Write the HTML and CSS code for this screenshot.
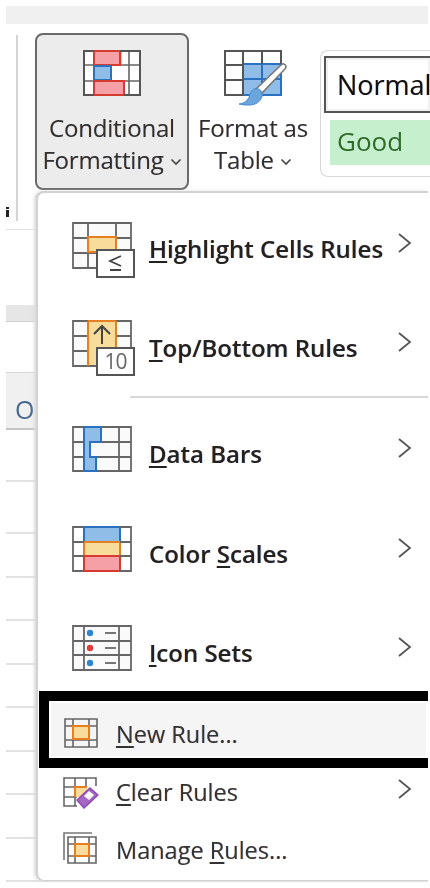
FILE: index.html
```html
<!DOCTYPE html>
<html lang="en">
<head>
<meta charset="utf-8">
<title>Conditional Formatting</title>
<link rel="stylesheet" href="styles.css">
</head>
<body>
<div class="page">
  <div class="topband"></div>
  <section class="ribbon">
    <span class="stub"></span>
    <div class="sep"></div>
    <div class="cf-btn">
      <svg class="ribbon-icon" width="60" height="48" viewBox="0 0 60 48">
        <rect x="2" y="2" width="56" height="44" fill="#fff"/>
        <path d="M2 16H13M39 16H58M2 32H13M43 32H58M47 2V46" stroke="#666" stroke-width="1.600" fill="none"/>
        <path d="M39 2V16M29 16V32" stroke="#999" stroke-width="1" fill="none"/>
        <rect x="12" y="2" width="26" height="14" fill="#f4a0a6" stroke="#d63b30" stroke-width="2"/>
        <rect x="12" y="17" width="17" height="14" fill="#90bde8" stroke="#2a72c0" stroke-width="2"/>
        <rect x="12" y="32" width="30" height="14" fill="#f4a0a6" stroke="#d63b30" stroke-width="2"/>
        <path d="M12 2H2V46H12M38 2H58V46H42" stroke="#555" stroke-width="2" fill="none"/>
      </svg>
      <div class="btn-label">Conditional<br>Formatting <svg class="mini" width="12" height="8" viewBox="0 0 12 8"><path d="M1.500 1.500L6 6L10.500 1.500" fill="none" stroke="#444" stroke-width="1.600"/></svg></div>
    </div>
    <div class="fmt-btn">
      <svg class="ribbon-icon" width="66" height="58" viewBox="0 0 66 58">
        <rect x="20" y="15" width="38" height="31" fill="#90bde8" stroke="#2a72c0" stroke-width="2"/>
        <path d="M39 15V46M20 30H58" stroke="#2a72c0" stroke-width="2"/>
        <path d="M20 46H2V2H58V15M20 2V46M39 2V15M2 16H20M2 31H20" fill="none" stroke="#555" stroke-width="2"/>
        <path d="M33 40L58 16C60 14 63 15 63 18C63 19 62 20 61 21L38 45Z" fill="#fff" stroke="#777" stroke-width="1.600"/>
        <path d="M16 55C23 54 26 50 27 45C29 39 35 38 38 42C42 47 36 56 27 56C23 56 19 56 16 55Z" fill="#6aa5dc" stroke="#4a8ccc"/>
      </svg>
      <div class="btn-label">Format as<br>Table <svg class="mini" width="12" height="8" viewBox="0 0 12 8"><path d="M1.500 1.500L6 6L10.500 1.500" fill="none" stroke="#444" stroke-width="1.600"/></svg></div>
    </div>
    <div class="styles">
      <div class="style-normal"><span>Normal</span></div>
      <div class="style-good">Good</div>
    </div>
  </section>
  <div class="formula"></div>
  <div class="greyband"></div>
  <div class="colspace"></div>
  <div class="rowhead"><span>O</span></div>
  <div class="sheet-row tall"></div><div class="sheet-row tall"></div><div class="sheet-row"></div><div class="sheet-row"></div><div class="sheet-row"></div>
  <div class="sheet-row"></div><div class="sheet-row"></div><div class="sheet-row"></div><div class="sheet-row"></div><div class="sheet-row"></div>

  <nav class="menu">
    <div class="item first">
      <svg class="big" width="64" height="56" viewBox="0 0 64 56">
        <rect x="1" y="1" width="58" height="45" fill="#fafafa"/>
        <rect x="17" y="15" width="28" height="15" fill="#f7dc9c"/>
        <path d="M1 1H59V46H1ZM1 16H16M44 16H59M1 31H26M16 1V46M44 1V15" fill="none" stroke="#666" stroke-width="1.800"/>
        <path d="M16 31V15H44V28" fill="none" stroke="#e67e22" stroke-width="2"/>
        <path d="M16 30H26" stroke="#e67e22" stroke-width="2"/>
        <rect x="25" y="28" width="37" height="27" fill="#fff" stroke="#555" stroke-width="2"/>
        <path d="M49 34L38 39L49 44M38 48H49" fill="none" stroke="#444" stroke-width="1.800"/>
      </svg>
      <span class="label strong tight"><u>H</u>ighlight Cells Rules</span>
      <svg class="chev" width="16" height="22" viewBox="0 0 16 22"><path d="M2 2L13 11L2 20" fill="none" stroke="#555" stroke-width="1.800"/></svg>
    </div>
    <div class="item second">
      <svg class="big" width="64" height="56" viewBox="0 0 64 56">
        <rect x="1" y="1" width="58" height="45" fill="#fafafa"/>
        <rect x="16" y="1" width="28" height="45" fill="#f7dc9c"/>
        <path d="M1 1H59V46H1ZM1 16H16M44 16H59M1 31H16M44 31H59" fill="none" stroke="#666" stroke-width="1.800"/>
        <path d="M16 1V46M44 1V28M16 1H44" fill="none" stroke="#e67e22" stroke-width="2"/>
        <path d="M30 24V6M22 14L30 6L38 14" fill="none" stroke="#444" stroke-width="2"/>
        <rect x="25" y="28" width="37" height="27" fill="#fff" stroke="#555" stroke-width="2"/>
      </svg>
      <span class="tenbox">10</span>
      <span class="label strong tight"><u>T</u>op/Bottom Rules</span>
      <svg class="chev" width="16" height="22" viewBox="0 0 16 22"><path d="M2 2L13 11L2 20" fill="none" stroke="#555" stroke-width="1.800"/></svg>
    </div>
    <div class="divider"></div>
    <div class="item">
      <svg class="big" width="60" height="46" viewBox="0 0 60 46">
        <rect x="1" y="1" width="58" height="44" fill="#fafafa"/>
        <path d="M1 1H59V45H1ZM1 16H59M1 31H59M47 1V45" fill="none" stroke="#666" stroke-width="1.800"/>
        <path d="M12 1H29V16H18V31H24V45H12Z" fill="#90bde8" stroke="#2a72c0" stroke-width="2"/>
      </svg>
      <span class="label strong"><u>D</u>ata Bars</span>
      <svg class="chev" width="16" height="22" viewBox="0 0 16 22"><path d="M2 2L13 11L2 20" fill="none" stroke="#555" stroke-width="1.800"/></svg>
    </div>
    <div class="item">
      <svg class="big" width="60" height="46" viewBox="0 0 60 46">
        <rect x="12" y="1" width="36" height="15" fill="#90bde8" stroke="#2a72c0" stroke-width="2"/>
        <rect x="12" y="16" width="36" height="14" fill="#f7dc9c" stroke="#e67e22" stroke-width="2"/>
        <rect x="12" y="30" width="36" height="15" fill="#f4a0a6" stroke="#d63b30" stroke-width="2"/>
        <path d="M12 1H1V45H12M48 1H59V45H48M1 16H12M48 16H59M1 30H12M48 30H59" fill="none" stroke="#666" stroke-width="1.800"/>
      </svg>
      <span class="label strong">Color <u>S</u>cales</span>
      <svg class="chev" width="16" height="22" viewBox="0 0 16 22"><path d="M2 2L13 11L2 20" fill="none" stroke="#555" stroke-width="1.800"/></svg>
    </div>
    <div class="item last">
      <svg class="big" width="60" height="46" viewBox="0 0 60 46">
        <rect x="1" y="1" width="58" height="44" fill="#fafafa"/>
        <path d="M1 1H59V45H1ZM1 16H59M1 30H59M12 1V45M47 1V45" fill="none" stroke="#666" stroke-width="1.800"/>
        <circle cx="18" cy="8" r="3.200" fill="#2f85d0"/><circle cx="18" cy="23" r="3.200" fill="#e0393e"/><circle cx="18" cy="38" r="3.200" fill="#2f85d0"/>
        <path d="M33 8H44M33 23H44M33 38H44" stroke="#777" stroke-width="2"/>
      </svg>
      <span class="label strong"><u>I</u>con Sets</span>
      <svg class="chev" width="16" height="22" viewBox="0 0 16 22"><path d="M2 2L13 11L2 20" fill="none" stroke="#555" stroke-width="1.800"/></svg>
    </div>
    <div class="picked">
      <div class="small-item new">
        <svg width="34" height="30" viewBox="0 0 34 30">
          <path d="M1 1H33V29H1ZM9 1V29M25 1V29M1 8H33M1 22H33" fill="none" stroke="#666" stroke-width="1.600"/>
          <rect x="9" y="8" width="16" height="13" fill="#f7dc9c" stroke="#e67e22" stroke-width="2"/>
        </svg>
        <span class="label"><u>N</u>ew Rule...</span>
      </div>
    </div>
    <div class="small-item clear">
      <svg width="36" height="32" viewBox="0 0 36 32">
        <path d="M33 9V1H1V29H14M12 1V29M23 1V10M1 10H23M1 20H14" fill="none" stroke="#666" stroke-width="1.600"/>
        <rect x="12" y="10" width="12" height="10" fill="#f7dc9c"/>
        <path d="M12 20V10H24" fill="none" stroke="#e67e22" stroke-width="2"/>
        <path d="M14 23L27 11L35 18L21 31Z" fill="#a566c4" stroke="#8e4bb0" stroke-width="1.500"/>
        <path d="M21 19L26 14L31 18L26 23Z" fill="#fff"/>
      </svg>
      <span class="label"><u>C</u>lear Rules</span>
      <svg class="chev" width="16" height="22" viewBox="0 0 16 22"><path d="M2 2L13 11L2 20" fill="none" stroke="#555" stroke-width="1.800"/></svg>
    </div>
    <div class="small-item manage">
      <svg width="34" height="32" viewBox="0 0 34 32">
        <path d="M1 28V1H29" fill="none" stroke="#777" stroke-width="1.600"/>
        <path d="M5 5H33V31H5ZM12 5V31M26 5V31M5 12H33M5 24H33" fill="none" stroke="#666" stroke-width="1.600"/>
        <rect x="12" y="12" width="14" height="12" fill="#f7dc9c" stroke="#e67e22" stroke-width="2"/>
      </svg>
      <span class="label">Manage <u>R</u>ules...</span>
    </div>
  </nav>
</div>
</body>
</html>
```

FILE: styles.css
```css
* { box-sizing: border-box; }
html, body { margin: 0; padding: 0; background: #fff; }
body { font-family: "Open Sans", "Noto Sans", sans-serif; color: #2a2a2a; }
.page { position: relative; width: 430px; height: 888px; overflow: hidden; padding: 6px 2px 0 6px; filter: blur(0.55px); }

.topband { height: 18px; background: #f0f0f0; }
.ribbon { display: flex; align-items: flex-start; height: 206px; padding-top: 9px; border-bottom: 1px solid #e3e3e3; }
.stub { flex: none; width: 3px; height: 10px; margin: 174px 7px 0 0; background: linear-gradient(#222 0 2px, transparent 2px 3px, #222 3px); }
.sep { flex: none; width: 2px; height: 186px; margin: 2px 17px 0 0; background: #d4d4d4; }
.cf-btn { flex: none; width: 154px; height: 157px; border: 2px solid #6a6a6a; border-radius: 8px; background: #ececec; display: flex; flex-direction: column; align-items: center; padding-top: 14px; }
.fmt-btn { flex: none; width: 128px; display: flex; flex-direction: column; align-items: center; padding-top: 16px; }
.fmt-btn .ribbon-icon { margin-left: 6px; }
.btn-label { font-size: 24px; line-height: 32px; letter-spacing: -0.2px; text-align: center; color: #2f2f2f; white-space: nowrap; text-shadow: -0.5px 0 rgba(255,130,0,.2), 0.5px 0 rgba(0,90,255,.2); }
.fmt-btn .btn-label { margin-top: 5px; }
.cf-btn .btn-label { margin-top: 15px; }
.mini { vertical-align: 3px; }

.styles { flex: none; width: 110px; height: 127px; margin: 17px -2px 0 3px; border: 1px solid #d8d8d8; border-right: 0; border-radius: 8px 0 0 8px; padding: 5px 0 0 3px; display: flex; flex-direction: column; }
.style-normal { height: 57px; border: 2px solid #555; border-right: 0; display: flex; align-items: center; padding-left: 11px; font-size: 27px; color: #111; overflow: hidden; box-shadow: inset 0 0 0 2px #f0f0f0; text-shadow: -0.6px 0 rgba(255,130,0,.35), 0.6px 0 rgba(0,90,255,.35); }
.style-good { height: 45px; margin: 7px 0 0 6px; background: #c6efce; color: #2f6a2a; font-size: 26px; line-height: 42px; padding-left: 7px; }

.formula { height: 75px; }
.greyband { height: 17px; background: #e6e6e6; border-bottom: 1px solid #cfcfcf; }
.colspace { height: 51px; border-bottom: 1px solid #d6d6d6; }
.rowhead { height: 57px; background: #f0f0f0; border-bottom: 2px solid #c4c4c4; font-size: 25px; color: #47688f; padding: 20px 0 0 9px; line-height: 32px; }
.sheet-row { height: 43.5px; border-bottom: 2px solid #e2e2e2; }
.sheet-row.tall { height: 52px; }

.menu { position: absolute; left: 36px; right: 2px; top: 191px; height: 690px; background: #fff; border: 2px solid #d2d2d2; border-right: 0; border-bottom: 1px solid #d2d2d2; border-radius: 8px 0 0 8px; display: flex; flex-direction: column; box-shadow: -2px 0 3px #dcdcdc; }
.item { position: relative; display: flex; align-items: flex-start; height: 100px; flex: none; padding: 28px 15px 0 34px; }
.item.first { padding-top: 29px; }
.item.second { padding-top: 27px; }
.item.last { height: 93px; padding-top: 27px; }
.big { flex: none; }
.label { white-space: nowrap; text-shadow: -0.6px 0 rgba(255,130,0,.3), 0.6px 0 rgba(0,90,255,.3); }
.label u { text-underline-offset: 3px; text-decoration-thickness: 2px; }
.strong { font-size: 24px; font-weight: 600; line-height: 30px; margin: 13px 0 0 17px; color: #222; }
.strong.tight { margin-left: 13px; }
.first .strong { margin-top: 12px; }
.chev { flex: none; margin: 11px 0 0 auto; }
.first .chev { margin-top: 10px; }
.tenbox { position: absolute; left: 59px; top: 55px; width: 37px; height: 27px; text-align: center; font-size: 21px; letter-spacing: -1px; line-height: 27px; color: #666; }
.divider { height: 2px; flex: none; margin: 3px 0 0 92px; background: #d8d8d8; }

.picked { flex: none; height: 77px; margin-left: 1px; border: 10px solid #000; border-right: 0; background: #f5f5f5; box-shadow: inset 0 0 0 2px #fff; }
.small-item { display: flex; align-items: flex-start; padding: 0 15px 0 25px; }
.small-item .label { font-size: 23.500px; line-height: 30px; color: #333; }
.small-item svg { flex: none; }
.new { padding: 17px 0 0 15px; }
.new .label { margin: 1px 0 0 18px; }
.clear { height: 54px; padding-top: 9px; }
.clear .label { margin-top: 0; margin-left: 17px; }
.clear .chev { margin-top: 1px; margin-left: auto; }
.manage { height: 58px; padding-top: 10px; }
.manage .label { margin-top: 3px; margin-left: 19px; }
```
